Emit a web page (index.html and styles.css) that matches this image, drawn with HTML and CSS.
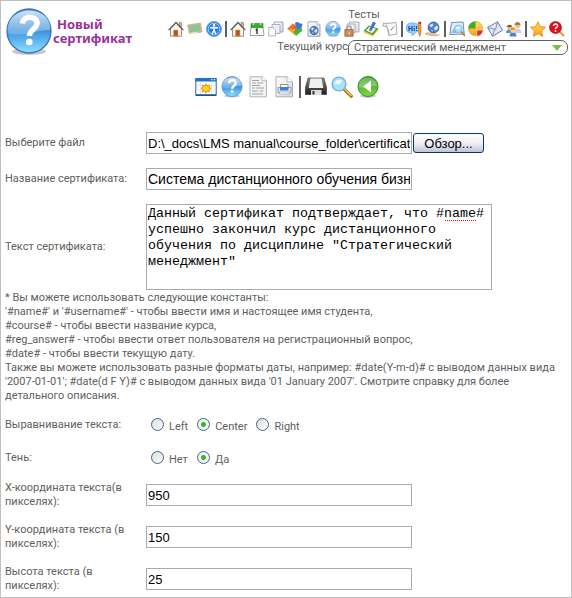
FILE: index.html
```html
<!DOCTYPE html>
<html lang="ru">
<head>
<meta charset="utf-8">
<title>Новый сертификат</title>
<link rel="stylesheet" href="styles.css">
</head>
<body>
<svg class="defs" aria-hidden="true">
  <defs>
    <linearGradient id="blue" x1="0" y1="0" x2="0" y2="1"><stop offset="0" stop-color="#3d84cf"/><stop offset=".5" stop-color="#3c94df"/><stop offset="1" stop-color="#8fe0ff"/></linearGradient>
    <linearGradient id="gloss" x1="0" y1="0" x2="0" y2="1"><stop offset="0" stop-color="#fff" stop-opacity=".75"/><stop offset="1" stop-color="#fff" stop-opacity=".2"/></linearGradient>
    <linearGradient id="green" x1="0" y1="0" x2="0" y2="1"><stop offset="0" stop-color="#2f9418"/><stop offset="1" stop-color="#7ede45"/></linearGradient>
    <linearGradient id="paper" x1="0" y1="0" x2="1" y2="1"><stop offset="0" stop-color="#fff"/><stop offset="1" stop-color="#d5d7dc"/></linearGradient>
    <linearGradient id="gold" x1="0" y1="0" x2="0" y2="1"><stop offset="0" stop-color="#ffe45c"/><stop offset="1" stop-color="#ff9c12"/></linearGradient>
    <linearGradient id="steel" x1="0" y1="0" x2="0" y2="1"><stop offset="0" stop-color="#8a8a8a"/><stop offset="1" stop-color="#1c1c1c"/></linearGradient>
  </defs>
  <symbol id="home" viewBox="0 0 16 16">
    <path d="M11 1.500h2.500v5h-2.500z" fill="#c8b4a4" stroke="#8a7668" stroke-width=".6"/>
    <path d="M2.500 8 8 2.200 13.500 8v7.200h-11z" fill="#fbfaf4" stroke="#77736c" stroke-width=".8"/>
    <path d="M.6 9.200 8 1.300l7.400 7.900" fill="none" stroke="#555" stroke-width="1.200"/>
    <path d="M5.500 9h4.500v6.200h-4.500z" fill="#b5541c" stroke="#f0a050" stroke-width=".7"/>
  </symbol>
  <symbol id="help" viewBox="0 0 48 48">
    <ellipse cx="24" cy="43.500" rx="17" ry="3.500" fill="#888" opacity=".45"/>
    <circle cx="24" cy="23" r="22" fill="url(#blue)" stroke="#3b76b4" stroke-width="1.300"/>
    <path d="M3 25C1 10 13 2.500 24 2.500S47 10 45 22C34 21 17 30 3 25z" fill="url(#gloss)"/>
    <path d="M17.500 15.500C18 7 33 7.500 32 16c-.6 5-7.500 5.500-7.500 12" fill="none" stroke="#fff" stroke-width="5.500"/>
    <circle cx="24.300" cy="34" r="3.300" fill="#fff"/>
  </symbol>
  <symbol id="globe" viewBox="0 0 12 12">
    <circle cx="6" cy="6" r="5" fill="#4f7fc4" stroke="#2b5294" stroke-width=".8"/>
    <path d="M2 4l3-2 1 2-2 2zM6 7l3-3 1.500 2-2 3zM3.500 8l2 .5-.5 1.500z" fill="#d3e4f8"/>
  </symbol>
  <symbol id="lens" viewBox="0 0 22 22">
    <path d="m13.500 13.500 6.700 6.700" stroke="#93640e" stroke-width="3.200" stroke-linecap="round"/>
    <path d="m13.500 13 6.500 6.500" stroke="#f2bb4e" stroke-width="1.800" stroke-linecap="round"/>
    <circle cx="8" cy="8" r="6.900" fill="#a8e2fb" stroke="#78aede" stroke-width="1.400"/>
    <path d="M3.500 8C4 4 8 3 11.500 4.500 10 8 7 9 3.500 8z" fill="#fff" opacity=".8"/>
  </symbol>
</svg>

<div class="page">
  <header class="header">
    <div class="brand">
      <svg class="brand-icon"><use href="#help"/></svg>
      <h1 class="brand-title">Новый<br>сертификат</h1>
    </div>
    <nav class="nav">
      <div class="nav-caption">Тесты</div>
      <div class="toolbar">
        <a href="#" aria-label="Главная"><svg><use href="#home"/></svg></a>
        <a href="#" aria-label="Доска"><svg viewBox="0 0 16 16"><path d="M.5 4 13.500 2l1.500 9L2.500 13z" fill="#d3b58a" stroke="#b79a6c" stroke-width=".5"/><path d="M2 5 12.500 3.300l1.100 6.500L3.300 11.500z" fill="#8cc49a"/><path d="m2.500 12 8-1.300v1.600L3.500 13.500z" fill="#f1eadd"/></svg></a>
        <a href="#" aria-label="Специальные возможности"><svg viewBox="0 0 16 16"><circle cx="8" cy="8" r="7.500" fill="#2b7de0" stroke="#6ba5e8"/><circle cx="8" cy="8" r="5.800" fill="none" stroke="#d6ebff" stroke-width=".7"/><circle cx="8" cy="4.400" r="1.300" fill="#fff"/><path d="M4 6.700h8M8 6.500v3.500M8 9.500l-2 3.500M8 9.500l2 3.500" stroke="#fff" stroke-width="1.500"/></svg></a>
        <i class="sep"></i>
        <a href="#" aria-label="Курс"><svg><use href="#home"/></svg></a>
        <a href="#" aria-label="Календарь"><svg viewBox="0 0 16 16"><path d="M2 6h12l1 8.500H1z" fill="#fafafa" stroke="#888" stroke-width=".8"/><path d="M2 2.500h12v4H2z" fill="#2fb32f" stroke="#23831f" stroke-width=".6"/><path d="M4.500 1v3M11.500 1v3" stroke="#ddd" stroke-width="1.300"/><path d="M6.700 9.200 8 8v5" fill="none" stroke="#222" stroke-width="1.300"/></svg></a>
        <a href="#" aria-label="Материалы"><svg viewBox="0 0 16 16"><path d="M6 1h9v10H6z" fill="url(#paper)" stroke="#8c93ac" stroke-width=".8"/><path d="M4 3.500h8v9H4z" fill="#eceef6" stroke="#9aa0b8" stroke-width=".8"/><path d="M.8 6.500h4L7.500 9v6H.8z" fill="#fff" stroke="#9aa0b8" stroke-width=".8"/></svg></a>
        <a href="#" aria-label="Модули"><svg viewBox="0 0 16 16"><path d="M0 8 6 2.500 10 5.500 5 10z" fill="#ef6a34"/><path d="M8 3c0-2 3-3 4-1l3.500 1-1 4-4 2z" fill="#3978dd"/><path d="m1 8.500 3-1 5 4-1 3z" fill="#f4a51c"/><path d="m6.500 10 3-3 2 1 3-1 1 2.500-6.500 5.500z" fill="#4caf45"/><circle cx="8.500" cy="7" r="1.800" fill="#ef5a24"/></svg></a>
        <a href="#" aria-label="Веб-страница"><svg viewBox="0 0 16 16"><path d="M2 .8h9l3 3v11.500H2z" fill="url(#paper)" stroke="#8d929d" stroke-width=".8"/><path d="M11 .8v3h3" fill="#fff" stroke="#8d929d" stroke-width=".6"/><use href="#globe" x="3" y="4.500" width="10" height="10"/></svg></a>
        <a href="#" aria-label="Тесты"><svg><use href="#help"/></svg></a>
        <a href="#" aria-label="Закрытые материалы"><svg viewBox="0 0 16 16"><path d="M5.500 1H15v10H5.500z" fill="url(#paper)" stroke="#9aa0aa" stroke-width=".8"/><path d="M3 3h8v9H3z" fill="#edeef2" stroke="#9aa0aa" stroke-width=".8"/><path d="M2.700 9V7.500a2.300 2.300 0 0 1 4.600 0V9" fill="none" stroke="#999" stroke-width="1.200"/><path d="M.8 8.500h8.400v6.800H.8z" fill="#c98a58" stroke="#97633a" stroke-width=".7"/><path d="M4.500 10.500h1.200v3H4.500z" fill="#f5dcc0"/></svg></a>
        <a href="#" aria-label="Задания"><svg viewBox="0 0 16 16"><path d="m.6 10 5-5.500 9.800 3-5.600 6.700z" fill="#439a47"/><path d="m.6 10 9.200 4.200 5.600-6.700v1.500L10 15.500.6 11.500z" fill="#f2c21d"/><path d="m3 9.500 3.500-4 6.500 2.200-4 4.500z" fill="#f4f5e6"/><path d="m6 9 4-8.500 3 1.500-5 8.500z" fill="#3177d3"/><path d="m6 10 .2-2L8 9.500z" fill="#ef7b22"/></svg></a>
        <a href="#" aria-label="Опросы"><svg viewBox="0 0 16 16"><path d="m4 2.500 10-1L15 13l-8 1.500z" fill="#fafafa" stroke="#999" stroke-width=".8"/><path d="M4 2.500 1.500 2 .8 5l3.500.5 2 3L7 14" fill="#efefef" stroke="#999" stroke-width=".8"/><path d="m8.500 9.500 3.500-4" stroke="#777"/></svg></a>
        <i class="sep"></i>
        <a href="#" aria-label="Чат"><svg viewBox="0 0 16 16"><path d="M1 4c1-3 10-3 11 0 1.500 3 1 6-2 7.500L6 15v-3C0 12-.5 8 1 4z" fill="#94cbf8" stroke="#5d9fdf" stroke-width=".6"/><path d="M3 5v5M6 5v5M3 7.500h3M8.200 7v3M8.200 5v1M10.500 5v3M10.500 9v1" stroke="#1d4e9d" stroke-width="1.200"/><path d="M12.500 1H15v11l-1.200 3.500-1.300-3.500z" fill="#f59b23" stroke="#b76815" stroke-width=".5"/><path d="M12.500 1H15v2h-2.500z" fill="#d92c26"/></svg></a>
        <a href="#" aria-label="Форум"><svg viewBox="0 0 16 16"><use href="#globe" x="2" y="0" width="13" height="13"/><path d="M0 12c3-1.500 5-.3 7 .5h4c1 0 1 1.300 0 1.300l4-.8c0 2-5 2.700-8 2.200L0 13.500z" fill="#e8b690"/></svg></a>
        <i class="sep"></i>
        <a href="#" aria-label="Поиск"><svg viewBox="0 0 16 16"><path d="m2.500 1.500 11.500-.5 1.200 12L.8 13.500z" fill="#deecfb" stroke="#5f83b9" stroke-width=".9"/><path d="M2 12 5 7l3 5" fill="#9abce6"/><use href="#lens" x="5" y="3.500" width="12" height="12"/></svg></a>
        <a href="#" aria-label="Статистика"><svg viewBox="0 0 16 16"><circle cx="7.500" cy="7.500" r="7" fill="url(#gold)" stroke="#bd8612" stroke-width=".6"/><path d="M7.500 7.500H.5a7 7 0 0 1 7-7z" fill="#3da936"/><path d="M8.800 9h6.500a7 7 0 0 1-6.500 6.500z" fill="#de3427" stroke="#fff" stroke-width=".6"/></svg></a>
        <a href="#" aria-label="Почта"><svg viewBox="0 0 16 16"><path d="M.6 6.500 10.500.8l5 8.500-10 6z" fill="#e2e8f8" stroke="#667aa8" stroke-width="1"/><path d="m.6 6.500 8 2 1.900-7.700M5.500 15.300l2-7" fill="none" stroke="#667aa8" stroke-width=".8"/></svg></a>
        <a href="#" aria-label="Пользователи"><svg viewBox="0 0 16 16"><path d="M7.500 12c0-6 8-6 8 0z" fill="#cad0d9"/><circle cx="11.500" cy="4.500" r="2.800" fill="#f2c396"/><path d="M8.500 4c0-4 6-4 6 0z" fill="#a97b40"/><path d="M0 12c0-5 6-5 6 0z" fill="#5e92d4"/><circle cx="3.500" cy="6.500" r="2.200" fill="#f0b684"/><path d="M1 6c0-3 5-3 5 0z" fill="#8b5525"/><path d="M3.500 15.500c0-6 7-6 7 0z" fill="#4684d8"/><circle cx="7" cy="9.500" r="2.500" fill="#fbd0a4"/><path d="M4.500 9c0-4 5-4 5 0z" fill="#dda52c"/></svg></a>
        <i class="sep"></i>
        <a href="#" aria-label="Избранное"><svg viewBox="0 0 16 16"><path d="m8 .6 2.300 5 5.300.6-4 3.700 1.100 5.500L8 12.700l-4.700 2.700 1.100-5.500-4-3.700 5.300-.6z" fill="url(#gold)" stroke="#d98c18" stroke-width=".8"/></svg></a>
        <a href="#" aria-label="Поиск по справке"><svg viewBox="0 0 16 16"><path d="m10.500 10.500 4 4" stroke="#d59b42" stroke-width="2" stroke-linecap="round"/><circle cx="6.500" cy="6.500" r="6" fill="#d9141b" stroke="#a70e13" stroke-width=".7"/><path d="M4.500 5c0-2.700 4.300-2.500 4 0-.2 1.300-2 1.500-2 3" fill="none" stroke="#fff" stroke-width="1.500"/><circle cx="6.500" cy="10" r=".9" fill="#fff"/></svg></a>
      </div>
      <div class="course">
        <label for="course">Текущий курс</label>
        <div class="course-box">
          <select id="course"><option>Стратегический менеджмент</option></select>
          <svg class="course-arrow" viewBox="0 0 10 6"><path d="M0 0h10L5 6z" fill="#7cc04f"/></svg>
        </div>
      </div>
    </nav>
  </header>

  <div class="toolbar toolbar-large">
    <a href="#" aria-label="Создать"><svg viewBox="0 0 22 22"><path d="M.8 2.500h20.400v17H.8z" fill="#fff" stroke="#1c62bd" stroke-width="1"/><path d="M.5 2h21v3.500H.5z" fill="#2470cb"/><path d="M16 3.700h1.500M18.700 3.700h1.500" stroke="#fff"/><path d="M1 9.500h20M1 14h20M5.500 6v13M11 6v13M16.500 6v13" stroke="#cfdcec" stroke-width=".7"/><path d="m11 8 1.200 2 2.300-1-.5 2.300 2 1.200-2 1.200.5 2.300-2.300-1L11 17l-1.200-2-2.300 1 .5-2.300-2-1.200 2-1.200L7.500 9l2.300 1z" fill="#ffd31c" stroke="#f18b0c"/><path d="M1 19h20" stroke="#174e9b" stroke-width="1.500"/></svg></a>
    <a href="#" aria-label="Справка"><svg><use href="#help"/></svg></a>
    <a href="#" aria-label="Документ"><svg viewBox="0 0 22 22"><path d="M3 .8h12l4.500 4v16H3z" fill="#f3f3f3" stroke="#b4b4b4"/><path d="M15 .8v4h4.500" fill="#fff" stroke="#aaa" stroke-width=".8"/><path d="M5 4.500h7M5 7h4M10 7h6M5 9.500h8M5 12h3M9 12h8M5 15h6M12.500 15h4M5 18h11" stroke="#a3a3a3" stroke-width="1.200"/></svg></a>
    <a href="#" aria-label="Печать"><svg viewBox="0 0 22 22"><path d="M3 .8h11l5.500 5v15H3z" fill="url(#paper)" stroke="#a9adb3"/><path d="M14 .8v5h5.500" fill="#fff" stroke="#a9adb3" stroke-width=".8"/><path d="M7.500 8.500h7.500v4H7.500z" fill="#fff" stroke="#777" stroke-width=".8"/><path d="M5 11.500h13v5H5z" fill="#e1e4e8" stroke="#8b8f96" stroke-width=".8"/><path d="M7 11h8.500v3.500H7z" fill="#3684e2"/><path d="M6.500 16h10v2h-10z" fill="#fff" stroke="#999" stroke-width=".6"/></svg></a>
    <i class="sep"></i>
    <a href="#" aria-label="Сохранить"><svg viewBox="0 0 22 22"><path d="M3 2h16l2.700 10v6.500H.3V12z" fill="url(#steel)" stroke="#333" stroke-width=".6"/><path d="M5.500 2.500h11l1.800 9.500H3.700z" fill="#efefef"/><path d="M6 14h10.500v5H6z" fill="#dedede"/><path d="M7.500 15h2v3.500h-2z" fill="#333"/></svg></a>
    <a href="#" aria-label="Просмотр"><svg><use href="#lens"/></svg></a>
    <a href="#" aria-label="Назад"><svg viewBox="0 0 22 22"><ellipse cx="11" cy="20" rx="8" ry="1.700" fill="#999" opacity=".5"/><circle cx="11" cy="10.500" r="10" fill="url(#green)" stroke="#358e23"/><path d="M2 11C1 4 7 1.500 11 1.500S20 5 20 10C14 9 9 13 2 11z" fill="#fff" opacity=".3"/><path d="M14 4.500v12L6 10.500z" fill="#fff"/></svg></a>
  </div>

  <form class="form">
    <div class="row">
      <label for="file">Выберите файл</label>
      <div class="file"><input class="text" id="file" type="text" value="D:\_docs\LMS manual\course_folder\certificate.jpg"><button class="browse" type="button">Обзор...</button></div>
    </div>
    <div class="row">
      <label for="name">Название сертификата:</label>
      <input class="text text-title" id="name" type="text" value="Система дистанционного обучения бизнесу">
    </div>
    <div class="row">
      <label for="body">Текст сертификата:</label>
      <div class="area"><textarea id="body" spellcheck="false">Данный сертификат подтверждает, что #name# успешно закончил курс дистанционного обучения по дисциплине "Стратегический менеджмент"</textarea><span class="misspelled"></span></div>
    </div>
    <p class="notes">* Вы можете использовать следующие константы:<br>'#name#' и '#username#' - чтобы ввести имя и настоящее имя студента,<br>#course# - чтобы ввести название курса,<br>#reg_answer# - чтобы ввести ответ пользователя на регистрационный вопрос,<br>#date# - чтобы ввести текущую дату.<br>Также вы можете использовать разные форматы даты, например: #date(Y-m-d)# с выводом данных вида '2007-01-01'; #date(d F Y)# с выводом данных вида '01 January 2007'. Смотрите справку для более детального описания.</p>
    <div class="row" role="radiogroup" aria-labelledby="align-label">
      <span id="align-label">Выравнивание текста:</span>
      <div class="radios">
        <label><input type="radio" name="align"><span>Left</span></label>
        <label><input type="radio" name="align" checked><span>Center</span></label>
        <label><input type="radio" name="align"><span>Right</span></label>
      </div>
    </div>
    <div class="row" role="radiogroup" aria-labelledby="shadow-label">
      <span id="shadow-label">Тень:</span>
      <div class="radios">
        <label><input type="radio" name="shadow"><span>Нет</span></label>
        <label><input type="radio" name="shadow" checked><span>Да</span></label>
      </div>
    </div>
    <div class="row">
      <label for="x">X-координата текста(в пикселях):</label>
      <input class="text" id="x" type="text" value="950">
    </div>
    <div class="row">
      <label for="y">Y-координата текста (в пикселях):</label>
      <input class="text" id="y" type="text" value="150">
    </div>
    <div class="row">
      <label for="h">Высота текста (в пикселях):</label>
      <input class="text" id="h" type="text" value="25">
    </div>
  </form>
</div>
</body>
</html>
```
FILE: styles.css
```css
* { box-sizing: border-box; }

body {
  margin: 0;
  background: #fff;
  color: #606060;
  font: 11px/14px Roboto, sans-serif;
}

.defs { position: absolute; width: 0; height: 0; }

.page {
  min-height: 100vh;
  border: 1px solid #c0c0c0;
  padding: 0 3px 4px 4px;
}

.header {
  display: flex;
  justify-content: space-between;
  padding-top: 7px;
}

.brand { display: flex; }
.brand-icon { width: 48px; height: 48px; }
.brand-title {
  margin: 9px 0 0;
  color: #993399;
  font: bold 13px/14px "Noto Sans", sans-serif;
  text-indent: 4px;
}

.nav { display: flex; flex-direction: column; }
.nav-caption { text-align: center; line-height: 13px; padding-right: 8px; }

.toolbar { display: flex; gap: 3px; padding-right: 3px; }
.toolbar a, .toolbar svg { display: block; width: 16px; height: 16px; }
.sep { width: 2px; background: #606060; }

.course {
  display: flex;
  justify-content: flex-end;
  margin-top: 3px;
}
.course-box { position: relative; width: 220px; }
.course select {
  display: block;
  width: 100%;
  height: 15px;
  border: 1px solid #606060;
  border-radius: 7px 7px 7px 0;
  padding: 0 5px;
  appearance: none;
  background: #fff;
  color: #606060;
  font: 11px/13px Roboto, sans-serif;
}
.course-arrow {
  position: absolute;
  top: 5px;
  right: 6px;
  width: 10px;
  height: 6px;
  pointer-events: none;
}

.toolbar-large {
  justify-content: center;
  gap: 4px;
  margin: 20px 0 34px;
  padding: 0;
}
.toolbar-large a, .toolbar-large svg { width: 22px; height: 22px; }

.form { display: flex; flex-direction: column; gap: 14px; }

.row {
  display: grid;
  grid-template-columns: 129px 1fr;
  column-gap: 12px;
  align-items: center;
}

.text {
  width: 266px;
  height: 22px;
  border: 1px solid #a5acb2;
  padding: 0 1px;
  background: #fff;
  color: #000;
  font: 13px "Liberation Sans", sans-serif;
}
.text-title { font-size: 14px; }

.file { display: flex; align-items: center; gap: 1px; }
.browse {
  width: 71px;
  height: 20px;
  border: 1px solid #003c74;
  border-radius: 3px;
  padding: 0;
  background: linear-gradient(#fff, #f0f0f6 50%, #c2c2d6);
  color: #000;
  font: 13px "Liberation Sans", sans-serif;
}

.area { position: relative; max-width: 346px; }
.area textarea {
  display: block;
  width: 100%;
  height: 86px;
  border: 1px solid #a5acb2;
  padding: 1px;
  resize: none;
  overflow: hidden;
  color: #000;
  font-family: "Liberation Mono", monospace;
  line-height: 16px;
}
.misspelled {
  position: absolute;
  top: 16px;
  left: 299px;
  width: 31px;
  border-bottom: 1px dotted #f00;
}

.notes { margin: -13px 0 -2px; }

.radios { display: flex; gap: 9px; padding-left: 5px; height: 19px; }
.radios label { display: flex; gap: 5px; }
.radios span { padding-top: 5px; }
.radios input {
  width: 13px;
  height: 13px;
  margin: 3px 0 0;
  border: 1px solid #3b6695;
  border-radius: 50%;
  appearance: none;
  background: linear-gradient(135deg, #dcdcd7, #fff);
}
.radios input:checked { background: radial-gradient(circle, #2fb82f 2px, #f6f6f4 3px); }
```
